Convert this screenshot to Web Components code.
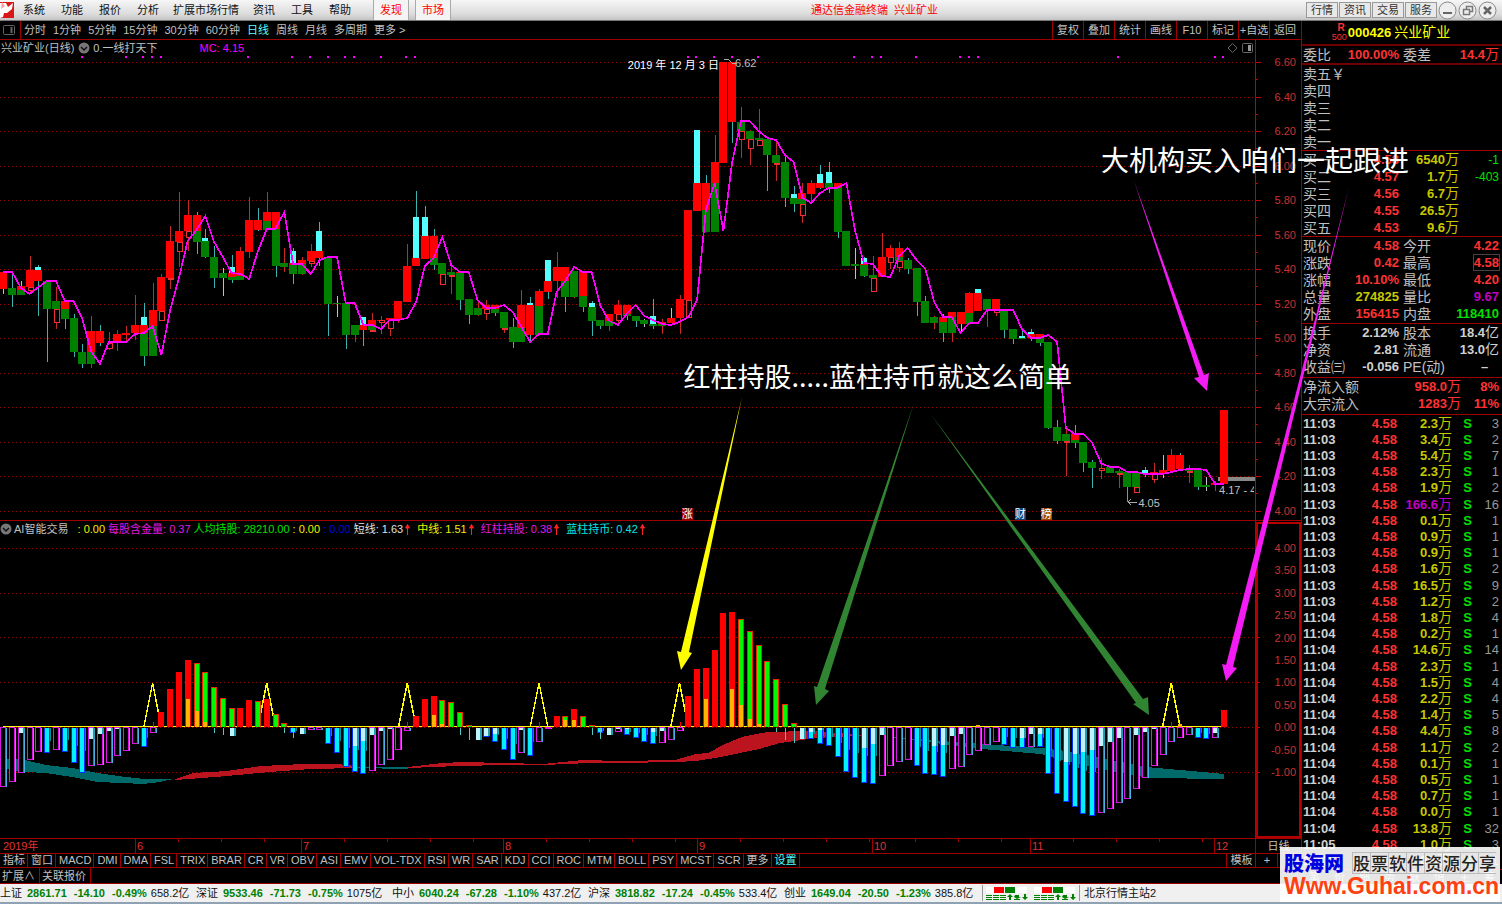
<!DOCTYPE html>
<html lang="zh-CN">
<head>
<meta charset="utf-8">
<title>通达信金融终端 兴业矿业</title>
<style>
html,body{height:100%}
body{margin:0;background:#000;color:#c0c0c0;overflow:hidden;
 font:11px/14px "Liberation Sans","Noto Sans CJK SC",sans-serif;
 --line:#a00000;--red:#ff3232;--yellow:#c8c800;--mag:#ff00ff;--cyan:#54ffff}
</style>
</head>
<body>
<trade-terminal>
  <title-bar slot="title">通达信金融终端&nbsp; 兴业矿业</title-bar>
  <period-bar slot="chart"></period-bar>
  <price-chart slot="chart"></price-chart>
  <signal-chart slot="chart"></signal-chart>
  <time-axis slot="chart"></time-axis>
  <indicator-tabs slot="chart"></indicator-tabs>
  <quote-panel slot="quote"></quote-panel>
  <status-bar slot="status"></status-bar>
  <chart-notes slot="over">
    <span slot="top">大机构买入咱们一起跟进</span>
    <span slot="middle">红柱持股.....蓝柱持币就这么简单</span>
  </chart-notes>
  <site-badge slot="over"></site-badge>
</trade-terminal>

<script>
const define = (name, html, setup) => {
  const t = document.createElement('template');
  t.innerHTML = html;
  customElements.define(name, class extends HTMLElement {
    constructor() {
      super();
      const root = this.attachShadow({mode: 'open'});
      root.append(t.content.cloneNode(true));
      if (setup) setup(root, this);
    }
  });
};
const reset = `:host,*{box-sizing:border-box}button{font:inherit;color:inherit;background:none;border:0;margin:0;padding:0;white-space:nowrap}a{color:inherit;text-decoration:none}`;

/* ---------- page frame ---------- */
define('trade-terminal', `<style>
:host{display:flex;flex-direction:column;height:100vh;position:relative}
main{flex:1;min-height:0;display:grid;grid-template-columns:minmax(0,1fr) 201px;grid-template-rows:minmax(0,1fr)}
.chart{display:flex;flex-direction:column;min-width:0;min-height:0}
.quote{min-height:0;overflow:hidden;display:flex}
</style>
<slot name="title"></slot>
<main><div class="chart"><slot name="chart"></slot></div><div class="quote"><slot name="quote"></slot></div></main>
<slot name="status"></slot><slot name="over"></slot>`);

/* ---------- title bar ---------- */
define('title-bar', `<style>${reset}
:host{display:flex;align-items:center;height:21px;flex:none;color:#111;background:linear-gradient(#f6f6f6,#dcdcdc 70%,#c4c4c4);border-bottom:1px solid #777}
svg{display:block;flex:none}
nav{display:flex;height:20px;align-items:center;padding-left:1px}
nav button{padding:0 8px}
nav button.wide{padding:0 6px}
nav button.hot{color:#f00;height:20px;padding:0 6px;background:#f4f4f4;border:solid #aaa;border-width:0 1px;margin-left:6px}
nav button.first{margin-left:14px}
h1{flex:1;margin:0;font:inherit;color:#f00;text-align:center;white-space:nowrap;padding-right:8px}
.r{display:flex;gap:1px;align-items:center;padding-right:5px}
.r button{width:32px;height:16px;border:1px solid #999;background:#e8e8e8;color:#333;line-height:14px}
.r button.o{width:19px;height:19px;border:0;background:none}
</style>
<svg width="14" height="16" viewBox="0 0 14 16"><rect width="14" height="16" fill="#d81818"/><path d="M0 1l6 0 2 4 5-4-1 6-5 4-3 0-1 4-3 1z" fill="#fff"/><path d="M2 0l3 4-4 3z" fill="#f9a0a0"/></svg>
<nav><button>系统</button><button>功能</button><button>报价</button><button>分析</button><button class="wide">扩展市场行情</button><button>资讯</button><button>工具</button><button>帮助</button><button class="hot first">发现</button><button class="hot">市场</button></nav>
<h1><slot></slot></h1>
<div class="r"><button>行情</button><button>资讯</button><button>交易</button><button>服务</button>
<button class="o" aria-label="最小化"><svg width="19" height="19"><circle cx="9.5" cy="9.5" r="8.5" fill="#eee" stroke="#888"/><path d="M5 12h9" stroke="#666" stroke-width="2"/></svg></button>
<button class="o" aria-label="还原"><svg width="19" height="19" fill="none"><circle cx="9.5" cy="9.5" r="8.5" fill="#eee" stroke="#888"/><path d="M8.500 8V5.500h6v5H12M5.500 8.500h6v5h-6z" stroke="#777" stroke-width="1.500"/></svg></button>
<button class="o" aria-label="关闭"><svg width="19" height="19"><circle cx="9.5" cy="9.5" r="8.5" fill="#eee" stroke="#888"/><path d="M6 6l7 7M13 6l-7 7" stroke="#666" stroke-width="2.500"/></svg></button></div>`);

/* ---------- period tool bar ---------- */
define('period-bar', `<style>${reset}
:host{display:flex;height:19px;flex:none;align-items:center;border-bottom:1px solid var(--line);justify-content:space-between}
.l,.r{display:flex;align-items:center;height:18px}
.l button{padding:0 4px 0 3px}
.l svg{margin:0 5px 0 3px}
.l i{width:1px;height:18px;background:var(--line)}
.l .on{color:var(--cyan)}
.r button{width:31px;height:18px;border-left:1px solid var(--line)}
.r{padding-right:1px}
</style>
<div class="l"><svg width="12" height="10" fill="none" stroke="#666"><rect x=".5" y=".5" width="11" height="9" rx="1"/><path d="M8.500 2v6" stroke="#666" stroke-width="2"/></svg><i></i>
<button>分时</button><button>1分钟</button><button>5分钟</button><button>15分钟</button><button>30分钟</button><button>60分钟</button><button class="on">日线</button><button>周线</button><button>月线</button><button>多周期</button><button>更多 &gt;</button></div>
<div class="r"><button>复权</button><button>叠加</button><button>统计</button><button>画线</button><button>F10</button><button>标记</button><button>+自选</button><button>返回</button></div>`);

/* ---------- chart helpers ---------- */
const X = i => 3.3 + 8.782 * i;
const rect = (x, y, w, h, f) => `<rect x="${x}" y="${y}" width="${w}" height="${h}" fill="${f}"/>`;
const chevron = `<svg class="ic" width="12" height="12"><circle cx="6" cy="6" r="5.500" fill="#777"/><path d="M3 5l3 3 3-3" fill="none" stroke="#111" stroke-width="1.500"/></svg>`;

/* One entry per day. Lower case: wick (r red, c cyan, w white); upper case: body (R, G, C filled, H hollow). */
const days = `w289-294 R272-289|c275-307 G288-295|w281-286 R286-290 G290-295|r256-292 R270-287 H287-291|c265-316 C267-270 R270-281|c281-362 G281-309|r287-329 G301-309 H309-323|c301-329 R301-309 G309-319|c314-357 G318-352|c344-368 G352-364|r316-368 R331-352 G352-364|c325-346 R331-343|r332-350 H343-349|r330-351 R334-342|r326-341 R333-335|r295-340 R325-333|c303-366 C317-325 R325-333 G333-356|r283-356 R310-326 G326-356|r274-321 R277-311 H311-321|r226-289 R241-278 H278-280|r192-267 R231-242 H242-252|r200-251 R215-231 H231-238|c212-254 R215-231 G231-242|c229-258 C238-241 G241-257|c246-288 G257-278|w268-296 G273-278|c255-283 C267-273 R273-277 G277-280|r247-280 R251-276 G276-280|r197-258 R220-252|c208-231 R220-230|r192-230 R212-221 G221-230|c212-277 R212-229 G229-266|r248-272 G263-267|c248-284 C251-263 R263-265 G265-274|r257-275 R260-264 G264-274|r244-267 R251-261 H261-264|c222-266 C231-251 R251-258|c257-336 G257-304|w296-317 G303-304|c303-349 G303-335|r325-342 G325-335|c317-346 C317-325 R325-330|r313-332 R320-326 G326-330 H330-332|r316-334 R320-321 H320-323|r318-336 R318-320 H320-329|r301-323 R301-320|r244-302 R266-302|c191-258 C217-258 R258-266|c206-259 C217-236 R236-259|c229-270 R236-258 G258-265|G263-274 H274-285|r265-294 G272-275 H275-277|c272-310 R272-273 G273-300|c299-324 G299-315|r300-316 G308-315|r300-320 R305-309 H309-314|c309-316 R305-309 G309-313|r312-333 G312-328 H328-330|c318-348 G327-342|r290-342 R305-328 G328-342|c297-342 C303-305 R305-335|r289-335 R291-306 G306-335|c281-299 C260-281 R281-292|r252-298 R267-281|c281-312 R267-281 G281-297|r290-298 G271-297|c306-312 R271-296 G296-307|c301-336 C303-307 G307-321|c320-329 G320-326|r314-331 R314-321 G321-326|r300-324 R305-314 H314-321|c314-320 R305-314 G314-316|c316-327 G316-321|w319-327 G320-324|c299-329 C316-324 G324-326|r319-334 R322-324 G324-326|w308-318 R318-323|r295-334 R299-318|R210-300 H300-318|C130-183 R183-211|c175-183 R183-210 G210-232|r135-162 R162-183 G183-232|R62-163|c122-143 R62-122|r107-158 G122-131 H131-140|r130-165 G131-139 H139-149|r109-146 G138-140 H140-146|c139-191 G139-155|r142-181 G155-163 H163-165|c156-207 G162-198|c186-212 C194-198 G198-204|r183-223 R193-199 G199-204 H204-216|r180-204 R183-194|c165-189 C174-183 R183-188|c162-193 C172-183 G183-188|c183-238 R183-188 G188-232|G231-266|w248-279 G264-266|c257-277 C258-264 R264-265 G265-276|r256-292 G275-278 H278-292|r233-277 R257-277|r245-269 R248-257 H257-263|r242-272 R248-257 G257-261 H261-268|c258-274 G260-269|c268-316 G268-302|c296-323 G301-323|r316-329 G317-323|c314-342 R317-322 G322-333|r312-342 R312-317 G317-333|w324-333 R312-324|r292-324 R293-313 G313-324|c289-311 C289-293 R293-311|r309-327 G299-310|r299-316 R299-310 H310-313|c310-338 G310-330|c329-344 G329-339|c330-339 C336-338 G338-339|c329-341 C332-334 R334-338|c338-346 R334-338 G338-343|c342-429 G342-428|c420-444 G427-441|r428-476 G434-441 H441-443|c425-448 R434-440 G440-443|c442-472 G442-463|c460-488 G462-468|r458-479 H468-471|G467-473|r469-488 G471-473 H473-475|c472-502 G472-487|G473-487 H487-493|c467-477 C470-473|r463-483 R472-474 H474-480|w455-478 R470-474|r449-471 R455-471|c453-469 R455-469|r465-483 G469-471 H471-473|c470-490 G470-487|w477-491 G485-487|r481-491 R483-485|R410-484`.split('|');
const average = [272,272,288,294,287,281,281,301,301,319,351,364,342,342,342,334,333,326,355,310,278,241,230,216,242,257,273,274,279,251,229,229,212,264,264,274,260,257,257,303,303,325,325,329,320,320,318,302,266,258,237,265,272,272,300,308,308,305,312,327,342,334,334,292,281,267,272,272,306,321,325,314,305,316,320,324,325,322,317,300,210,183,231,162,121,121,131,138,140,155,162,198,203,193,188,188,183,231,263,264,276,277,256,248,260,269,302,317,317,333,323,323,310,310,310,310,329,338,338,335,342,428,434,434,443,463,467,467,472,472,474,474,474,472,470,469,469,470,484,484];
const dots = [82,126,143,152,161,248,292,310,328,345,354,381,406,415,688,696,714,732,758,854,872,881,916,960,969,978,1118,1215,1223];

function drawPrice() {
  let s = '';
  for (let k = 0; k < 14; k++) {
    const y = Math.round(62 + k * 34.54);
    s += `<path d="M0 ${y}.5H1255" stroke="#900" stroke-dasharray="1 3"/>` + rect(1256, y, 5, 1, '#c00') + (k < 13 ? rect(1256, y + 17, 2, 1, '#c00') : '');
  }
  s += rect(1255, 0, 1, 521, '#c00000') + rect(0, 520, 1301, 1, '#a00000');
  dots.forEach(x => s += rect(x - 1, 56, 2, 2, '#f0f'));
  const col = {r: '#c82828', c: '#3cb4b4', w: '#c0c0c0', R: '#f00', G: '#008000', C: '#54ffff'};
  days.forEach((d, i) => {
    const x = Math.round(X(i));
    d.split(' ').forEach(m => {
      const [a, b] = m.slice(1).split('-').map(Number), c = m[0];
      if (c === 'H') s += `<rect x="${x - 2}.5" y="${a}.5" width="5" height="${Math.max(1, b - a - 1)}" fill="#000" stroke="#f03030"/>`;
      else if (c < 'a') { const w = c === 'C' ? 6 : 8; s += rect(x - w / 2, a, w, Math.max(1, b - a), col[c]); }
      else s += rect(x, a, 1, b - a, col[c]);
    });
  });
  s += rect(1218, 477, 37, 4, '#888') + rect(1220, 410, 8, 74, '#f00');
  s += `<polyline points="${average.map((y, i) => X(i).toFixed(1) + ',' + y).join(' ')}" fill="none" stroke="#f0f" stroke-width="1.700"/>`;
  s += `<path d="M1128 502h9M1131 499l-3 3 3 3M724 59l5 1 3 3h4" fill="none" stroke="#aaa"/>`;
  return s;
}
const axis = (from, step, n) => Array.from({length: n}, (_, k) => `<span>${(from - k * step).toFixed(2)}</span>`).join('');
const chartCss = `${reset}
:host{display:flex;position:relative;min-height:0;overflow:hidden}
.plot{position:absolute;inset:0;width:100%;height:100%;display:block}
header{position:relative;flex:1;display:flex;align-items:center;height:16px;white-space:nowrap;min-width:0}
.ic{flex:none}
.axis{position:relative;width:45px;display:flex;flex-direction:column;justify-content:space-between;align-items:flex-end;color:#c83232;line-height:12px}
.tag{position:absolute;white-space:nowrap;line-height:12px}`;

define('price-chart', `<style>${chartCss}
:host{flex:481 1 0}
header{padding:0 3px 0 1px}
.ic{margin:0 3px 0 4px}
.mc{color:var(--mag);margin-left:42px;flex:1}
.axis{padding:16px 5px 4px 0}
.b{color:#fff;width:11px;text-align:center;height:12px}
</style>
<svg class="plot" viewBox="0 40 1301 481" preserveAspectRatio="none" shape-rendering="crispEdges">${drawPrice()}</svg>
<header><span>兴业矿业(日线)</span>${chevron}<span>0.一线打天下</span><span class="mc">MC: 4.15</span>
<svg width="26" height="12" fill="none" stroke="#666"><path d="M5.500 1.500l4.500 4.500-4.500 4.500L1 6z"/><rect x="15.500" y="1.500" width="10" height="9" rx="1"/><path d="M22.500 3v6" stroke="#999" stroke-width="3"/></svg></header>
<div class="axis">${axis(6.6, .2, 14)}</div>
<span class="tag" style="left:56.5%;top:3.5%">6.62</span>
<span class="tag" style="left:87.5%;top:95%">4.05</span>
<span class="tag" style="left:93.7%;top:92.300%;width:35px;overflow:hidden">4.17 - 4</span>
<span class="tag b" style="left:52.400%;top:97.300%;background:#900">涨</span>
<span class="tag b" style="left:78%;top:97.300%;background:#0a4478">财</span>
<span class="tag b" style="left:80%;top:97.300%;background:#9a4a00">榜</span>`);

/* Signal bars by day: M outlined, B blue, P pale, R red, G green, O orange foot, T thin tail. */
const bars = `M787|M782|M773 P733|M760|M752|B753|M750|B752|B763|B773|M766 P739|M765 P734|M763 P731|M756 P729|M751|M744|B747|M733|R712|R689|R672|R660 O699|G663 O711|G672 O722|G687 T733|G698 T735|G708 P736|R708|R700|G701|R699|G714|G723 T733|B733 T738|P734|M730|M730|B744|B753|B767|B772 P746|B774 P741|M771 P735|M765 P731|M760 P729|M750|M731|R716|R699|R696 O715|G700 O724|G702|G712 T735|G725 T740|P740|B737 P736|B742 P734|B750|B760|M753 P730|B756|M742|M729|R716|G716 O720|R709 O720|G716|G725 T735|B733 T739|P735|M732 P729|B735 P729|B738|B742|B744 P732|M743 P731|M740|M731|R696|R669|R668 O699|R650|R613|R612 O689|G619 O705|G631 O719|G645 O724|G661|G679 T732|G704 T740|G723 T743|P739|B739 P732|B744 P730|B746|B757|B772|B778|B783 P748|B784 P744|M776 P735|M766|M762|M760|B766|B774|B775 P746|B777 P745|M769 P736|M767 P734|M755|M751 O725|M745|M742|B745|B748|B748 P738|M747 P734|B747 P734|B774|B794|B802 P762|B807 P754|B814 P752|B816 P750|M813 P746|M809 P742|M803 P738|M799|M789 P735|M778 P732|M766 P729|M755|M742|M738 O724|M735|B738|B739|M738 P733|R710`.split('|');

function drawSignal() {
  let s = '';
  [548, 593, 637, 682, 727, 772].forEach(y => s += `<path d="M0 ${y}.5H1255" stroke="#900" stroke-dasharray="1 3"/>` + rect(1256, y, 4, 1, '#c00') + rect(1256, y + 22, 2, 1, '#c00'));
  s += rect(1255, 521, 1, 317, '#c00000') + `<rect x="1257" y="523" width="43" height="314" fill="none" stroke="#b40000" stroke-width="2"/>`;
  const area = (p, f) => s += `<polygon points="${p}" fill="${f}"/>`;
  area('0,758 25,760 46,765 72,768 97,773 126,777 145,779 173,779 160,782 143,784 122,783 97,782 72,777 46,773 25,772 0,768', '#006a6a');
  area('175,779 194,773 227,771 261,766 303,764 337,764 356,766 356,768 311,769 269,772 227,776 175,780', '#bb141e');
  area('356,767 408,767 408,769 356,768', '#006a6a');
  area('408,767 442,763 463,762 505,763 543,764 583,760 620,761 675,760 696,754 708,753 725,744 742,737 767,732 809,731 856,734 864,736 830,737 809,739 780,743 759,749 721,757 696,761 675,762 620,763 589,763 543,765 505,765 459,766 408,768', '#bb141e');
  area('864,735 906,738 927,740 969,743 1011,746 1041,748 1066,751 1096,757 1146,767 1180,770 1224,774 1224,779 1150,778 1104,770 1062,760 1041,754 982,749 927,742 889,737', '#006a6a');
  const peaks = [17, 30, 46, 61, 77, 133];
  s += `<path d="M3 726.500H1222" stroke="#ff0" stroke-width="1"/>`;
  peaks.forEach(i => s += `<polyline points="${X(i - 1)},727 ${X(i)},683 ${X(i + 1)},727" fill="none" stroke="#ff0" stroke-width="1.500"/>`);
  bars.forEach((d, i) => {
    const x = Math.round(X(i));
    d.split(' ').forEach(m => {
      const y = +m.slice(1), c = m[0], h = y - 728;
      if (c === 'M') s += rect(x + 3, 728, 1, h, '#4ab0e8') + `<rect x="${x - 3}.5" y="727.500" width="5" height="${y - 728}" fill="#000" stroke="#d818e0"/>`;
      if (c === 'B') s += rect(x - 3, 728, 6, h, '#0030ff') + rect(x - 2, 728, 4, h - 1, '#00f0ff') + rect(x + 3, 728, 1, Math.round(h / 2), '#008c9c');
      if (c === 'P') s += rect(x - 2, 728, 4, h, '#c0f4fc') + rect(x + 2, 728, 2, h, '#209cb0');
      if (c === 'R') s += rect(x - 3, y, 6, 727 - y, '#f00');
      if (c === 'G') s += rect(x - 3, y, 6, 727 - y, '#f02800') + rect(x - 2, y + 1, 4, 726 - y, '#00f800');
      if (c === 'O') s += rect(x - 2, y, 4, 727 - y, '#ffb400');
      if (c === 'T') s += rect(x, 728, 1, h, '#54c8c8');
    });
  });
  [17, 46, 61, 77, 133].forEach(i => s += rect(Math.round(X(i)), 722, 1, 5, '#f00'));
  return s;
}
const up = '<svg class="up" width="5" height="11"><path d="M2.500 11V2M.5 4l2-3.500 2 3.500z" stroke="#f22" fill="#f22"/></svg>';
define('signal-chart', `<style>${chartCss}
:host{flex:317 1 0}
header{gap:3px}
.ic{margin-right:-1px}
.up{margin:0 4px 0 -1px}
.y{color:#f0f000}.m{color:#e018e0}.g{color:#00e000}.b{color:#0000e8}.w{color:#e0e0e0}.c{color:#00e8e8}
.axis{padding:21px 5px 60px 0}
</style>
<svg class="plot" viewBox="0 521 1301 317" preserveAspectRatio="none" shape-rendering="crispEdges">${drawSignal()}</svg>
<header>${chevron}<span>AI智能交易</span><span class="y">&nbsp; : 0.00</span><span class="m">每股含金量: 0.37</span><span class="g">人均持股: 28210.00</span><span class="y">: 0.00</span><span class="b">: 0.00</span><span class="w">短线: 1.63</span>${up}<span class="y">中线: 1.51</span>${up}<span class="m">红柱持股: 0.38</span>${up}<span class="c">蓝柱持币: 0.42</span>${up}</header>
<div class="axis">${axis(4, .5, 11)}</div>`);

/* ---------- month scale ---------- */
define('time-axis', `<style>${reset}
:host{display:flex;height:15px;flex:none;border-top:1px solid var(--line);color:#e03232;line-height:14px}
.m{flex:1;display:grid;grid-template-columns:135fr 166fr 202fr 194fr 175fr 158fr 184fr 41fr;min-width:0}
.m span{border-left:1px solid var(--line);padding-left:1px;background:repeating-linear-gradient(90deg,transparent 0 42px,#a00000 42px 43px) 0 0/100% 3px no-repeat}
.m span:first-child,.m span:last-child{background:none}
.m span:first-child{border:0;padding-left:3px}
.d{width:46px;border-left:1px solid var(--line);text-align:center;color:#c0c0c0}
</style>
<div class="m"><span>2019年</span><span>6</span><span>7</span><span>8</span><span>9</span><span>10</span><span>11</span><span>12</span></div><div class="d">日线</div>`);

/* ---------- indicator tabs ---------- */
define('indicator-tabs', `<style>${reset}
:host{display:block;flex:none}
div{display:flex;border-top:1px solid var(--line);height:14px;line-height:13px}
div+div{height:17px;line-height:16px;border-bottom:1px solid var(--line)}
button{padding:0 2px 0 3px;border-right:1px solid var(--line)}
.on{color:var(--cyan)}
.sp{flex:1;border-right:1px solid var(--line)}
.add{width:22px}.t{width:29px}
.e{width:23px;border:0}
div+div button{padding:0 4px 0 2px}
</style>
<div>${['指标','窗口','MACD','DMI','DMA','FSL','TRIX','BRAR','CR','VR','OBV','ASI','EMV','VOL-TDX','RSI','WR','SAR','KDJ','CCI','ROC','MTM','BOLL','PSY','MCST','SCR','更多'].map(t => `<button>${t}</button>`).join('')}<button class="on">设置</button><span class="sp"></span><button class="t">模板</button><button class="add">+</button><button class="e">-</button></div>
<div><button>扩展∧</button><button>关联报价</button></div>`);

/* ---------- quote panel ---------- */
const W = v => v.replace(/[万亿]/, '<b>$&</b>');
const four = rows => `<table class="q4">${rows.map(r => `<tr><th>${r[0]}</th><td class="${r[2]}">${W(r[1])}</td><th>${r[3]}</th><td class="${r[5]}">${W(r[4])}</td></tr>`).join('')}</table>`;
const ticks = `11:03 2.3 3,11:03 3.4 2,11:03 5.4 7,11:03 2.3 1,11:03 1.9 2,11:03 166.6 16,11:03 0.1 1,11:03 0.9 1,11:03 0.9 1,11:03 1.6 2,11:03 16.5 9,11:03 1.2 2,11:04 1.8 4,11:04 0.2 1,11:04 14.6 14,11:04 2.3 1,11:04 1.5 4,11:04 2.2 4,11:04 1.4 5,11:04 4.4 8,11:04 1.1 2,11:04 0.1 1,11:04 0.5 1,11:04 0.7 1,11:04 0.0 1,11:04 13.8 32,11:05 1.0 3,11:05 0.6 1`.split(',').map(t => t.split(' '));
define('quote-panel', `<style>${reset}
:host{flex:1;display:flex;flex-direction:column;border-left:1px solid #a00000;min-width:0;min-height:0;font-size:13px;line-height:17px}
h2{margin:0;height:25px;flex:none;display:flex;align-items:center;justify-content:center;gap:1px;font-size:13px;color:#ff0;border-bottom:2px solid #700000;padding:0 22px 0 0}
h2 small{font-size:9px;line-height:9px;color:var(--red);text-align:right;font-weight:400}
h2 small b{font-size:10px;padding-right:2px}
h2 span{font-weight:400;font-size:14px;padding-left:2px}
table{border-collapse:collapse;width:100%;table-layout:fixed;flex:none}
tr{height:17px}
th,td{padding:0;white-space:nowrap;text-align:right;font-weight:700;overflow:visible;line-height:16px}
th{text-align:left;font-weight:400;font-size:14px;color:#c0c0c0}
td b{font-weight:400;font-size:14px}
.s{flex:none;border-bottom:1px solid var(--line);padding:0 3px 0 1px}
.s.one{border-bottom:2px solid #700000}
.s.pad{padding-bottom:1px}.s.pad2{padding-bottom:2px}
.q4 th:nth-child(1){width:40px}.q4 td:nth-child(2){width:56px}.q4 th:nth-child(3){width:44px;padding-left:4px}
.r{color:var(--red)}.y{color:var(--yellow)}.g{color:#00e000}.m{color:#c000c0}.w{color:#d0d0d0}
.box span{outline:1px solid #444}
.buy th{width:40px}.buy td:nth-child(2){width:56px}.buy td:nth-child(3){width:60px}.buy td:nth-child(4){font-weight:400;font-size:12px}
.flow td:nth-child(2){width:70px}.flow td:nth-child(3){width:38px}
.tick{flex:1 1 0;min-height:0;padding:0 3px 0 1px}
.tick table{height:100%}
.tick tr{height:auto}
.tick td{line-height:13px}
.tick b{line-height:12px}
.tick td:nth-child(1){text-align:left;width:40px}.tick td:nth-child(2){width:54px}.tick td:nth-child(3){width:55px}.tick td:nth-child(4){width:20px}.tick td:nth-child(5){font-weight:400;color:#999}
nav{flex:none;display:flex;justify-content:space-around;height:15px;border-top:1px solid var(--line);font-size:11px;line-height:14px}
</style>
<h2><small><b>R</b><br>500</small>000426<span>兴业矿业</span></h2>
<div class="s one">${four([['委比','100.00%','r','委差','14.4万','r']])}</div>
<div class="s"><table>${['卖五￥','卖四','卖三','卖二','卖一'].map(t => `<tr><th>${t}</th></tr>`).join('')}</table></div>
<div class="s buy"><table>${[['买一','4.58','6540万','-1'],['买二','4.57','1.7万','-403'],['买三','4.56','6.7万',''],['买四','4.55','26.5万',''],['买五','4.53','9.6万','']].map(r => `<tr><th>${r[0]}</th><td class="r">${r[1]}</td><td class="y">${W(r[2])}</td><td class="g">${r[3]}</td></tr>`).join('')}</table></div>
<div class="s pad">${four([['现价','4.58','r','今开','4.22','r'],['涨跌','0.42','r','最高','<span>4.58</span>','r box'],['涨幅','10.10%','r','最低','4.20','r'],['总量','274825','y','量比','9.67','m'],['外盘','156415','r','内盘','118410','g']])}</div>
<div class="s pad2">${four([['换手','2.12%','w','股本','18.4亿','w'],['净资','2.81','w','流通','13.0亿','w'],['收益㈢','-0.056','w','PE(动)','–&nbsp;&nbsp;&nbsp;','w']])}</div>
<div class="s pad2 flow"><table><tr><th>净流入额</th><td class="r">${W('958.0万')}</td><td class="r">8%</td></tr><tr><th>大宗流入</th><td class="r">${W('1283万')}</td><td class="r">11%</td></tr></table></div>
<div class="tick"><table>${ticks.map(t => `<tr><td class="w">${t[0]}</td><td class="r">4.58</td><td class="${t[1] === '166.6' ? 'm' : 'y'}">${t[1]}<b>万</b></td><td class="g">S</td><td>${t[2]}</td></tr>`).join('')}</table></div>
<nav><span>笔</span><span>价</span><span>细</span><span>势</span><span>联</span><span>值</span><span>主</span><span>筹</span></nav>`);

/* ---------- status bar ---------- */
const meter = `<svg width="44" height="14"><rect x="1" y="1" width="41" height="6" fill="#fff"/><rect x="9" y="1" width="10" height="6" fill="#f00"/><rect x="20" y="1" width="10" height="6" fill="#008000"/><g fill="#008000"><rect x="1" y="9" width="6" height="1"/><rect x="1" y="11" width="6" height="1"/><rect x="1" y="13" width="6" height="1"/><rect x="8" y="9" width="6" height="1"/><rect x="8" y="11" width="6" height="1"/><rect x="8" y="13" width="6" height="1"/><rect x="15" y="9" width="6" height="1"/><rect x="15" y="11" width="6" height="1"/><rect x="15" y="13" width="6" height="1"/><path d="M22 11l3-3 3 3h-2v3h-2v-3zM29 13h6v1h-6zM30 9h4v2h2l-4 2-3-2zM37 11h2V8h2v3h2l-3 3z"/></g></svg>`;
define('status-bar', `<style>${reset}
:host{display:flex;height:20px;flex:none;align-items:center;background:#f0f0f0;color:#111;border-bottom:2px solid #8ea2b4;white-space:nowrap;overflow:hidden}
.i{width:196px;flex:none;display:flex;gap:7px}
b{color:#008000}
.i span+b{margin-left:-2px}
.i b+span{margin-left:-3px}
.x{display:flex;gap:4px;border:solid #999;border-width:0 1px;padding:0 2px;margin-right:4px;height:16px;align-items:center}
.i:nth-of-type(5){width:198px}
</style>
${[['上证','2861.71','-14.10','-0.49%','658.2亿'],['深证','9533.46','-71.73','-0.75%','1075亿'],['中小','6040.24','-67.28','-1.10%','437.2亿'],['沪深','3818.82','-17.24','-0.45%','533.4亿'],['创业','1649.04','-20.50','-1.23%','385.8亿']].map(r => `<div class="i"><span>${r[0]}</span><b>${r[1]}</b><b>${r[2]}</b><b>${r[3]}</b><span>${r[4]}</span></div>`).join('')}
<div class="x">${meter}${meter}</div><span>北京行情主站2</span>`);

/* ---------- annotations over the charts ---------- */
define('chart-notes', `<style>
:host{position:absolute;inset:0;pointer-events:none;color:#fff}
svg{position:absolute;inset:0;width:100%;height:100%}
div{position:absolute;white-space:nowrap;font-family:"Noto Sans CJK SC",sans-serif}
.a{left:73.300%;top:15.400%;font-size:28px;line-height:40px}
.b{left:45.500%;top:39.400%;font-size:27px;line-height:40px}
.d{left:41.800%;top:6.300%;line-height:16px;font-family:"Liberation Sans","Noto Sans CJK SC",sans-serif}
</style>
<svg viewBox="0 0 1502 904" preserveAspectRatio="none">
<path fill="#ff0" d="M742 397L689 652l3 1-11 17-4-19 4 1z"/>
<g fill="#318431"><path d="M914 403L825 689l4 2-13 14-2-19 3 1z"/><path d="M930 413l213 286 5-2 1 18-16-11 3-1z"/></g>
<g fill="#f41cf4"><path d="M1134 181l70 194 5-2-2 18-13-13 5-1z"/><path d="M1349 187l-116 480 4 1-11 13-4-17 4 1z"/></g>
</svg>
<div class="a"><slot name="top"></slot></div><div class="b"><slot name="middle"></slot></div><div class="d">2019 年 12 月 3 日</div>`);

define('site-badge', `<style>${reset}
:host{position:absolute;right:2px;bottom:2px;width:220px;height:55px;background:rgba(255,255,255,.9);padding:4px 4px 0;white-space:nowrap}
.t{display:flex;align-items:center;justify-content:space-between;height:23px}
b{font:900 20px/23px "Noto Sans CJK SC",sans-serif;color:#0000e0}
.k{display:flex;font:500 17px/20px "Noto Sans CJK SC",sans-serif;color:#222}
.k span{width:18px;text-align:center;border:solid #bbb;border-width:1px 0 1px 1px}
a{display:block;font:700 23px/25px "Liberation Sans",sans-serif;color:#ff4010}
</style>
<div class="t"><b>股海网</b><div class="k">${[...'股票软件资源分享'].map(c => `<span>${c}</span>`).join('')}</div></div>
<a href="#">Www.Guhai.com.cn</a>`);
</script>
</body>
</html>
